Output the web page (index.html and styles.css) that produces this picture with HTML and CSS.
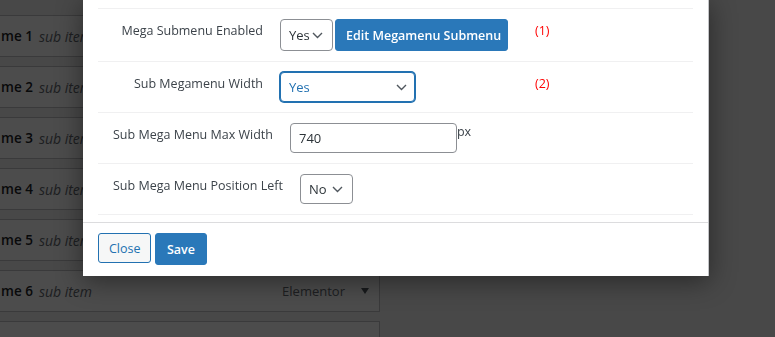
FILE: index.html
```html
<!DOCTYPE html>
<html lang="en">
<head>
  <meta charset="UTF-8">
  <meta name="viewport" content="width=device-width, initial-scale=1.0">
  <title>Mega Menu Settings</title>
  <link rel="stylesheet" href="styles.css">
</head>
<body>
  <ul class="menu-list">
    <li class="menu-item"><span class="item-title">me 1</span><em class="item-sub">sub item</em><span class="item-type">Elementor</span><span class="item-arrow"></span></li>
    <li class="menu-item"><span class="item-title">me 2</span><em class="item-sub">sub item</em><span class="item-type">Elementor</span><span class="item-arrow"></span></li>
    <li class="menu-item"><span class="item-title">me 3</span><em class="item-sub">sub item</em><span class="item-type">Elementor</span><span class="item-arrow"></span></li>
    <li class="menu-item"><span class="item-title">me 4</span><em class="item-sub">sub item</em><span class="item-type">Elementor</span><span class="item-arrow"></span></li>
    <li class="menu-item"><span class="item-title">me 5</span><em class="item-sub">sub item</em><span class="item-type">Elementor</span><span class="item-arrow"></span></li>
    <li class="menu-item"><span class="item-title">me 6</span><em class="item-sub">sub item</em><span class="item-type">Elementor</span><span class="item-arrow"></span></li>
    <li class="menu-item"></li>
  </ul>

  <div class="backdrop"></div>

  <div class="dialog">
    <div class="dialog-body">
      <div class="row">
        <label class="row-label">Mega Submenu Enabled</label>
        <div class="row-field">
          <select class="select select-small">
            <option>Yes</option>
            <option>No</option>
          </select>
          <button class="btn btn-primary btn-edit">Edit Megamenu Submenu</button>
        </div>
        <span class="row-note">(1)</span>
      </div>

      <div class="row">
        <label class="row-label">Sub Megamenu Width</label>
        <div class="row-field">
          <select class="select select-wide is-focus">
            <option>Yes</option>
            <option>No</option>
          </select>
        </div>
        <span class="row-note">(2)</span>
      </div>

      <div class="row">
        <label class="row-label">Sub Mega Menu Max Width</label>
        <div class="row-field">
          <input class="text-input" type="text" value="740"><span class="unit">px</span>
        </div>
      </div>

      <div class="row">
        <label class="row-label">Sub Mega Menu Position Left</label>
        <div class="row-field">
          <select class="select select-small">
            <option>No</option>
            <option>Yes</option>
          </select>
        </div>
      </div>
    </div>

    <div class="dialog-footer">
      <button class="btn btn-secondary">Close</button>
      <button class="btn btn-primary btn-save">Save</button>
    </div>
  </div>
</body>
</html>
```

FILE: styles.css
```css
body {
  margin: 0;
  background: #f0f0f1;
  font-family: "Open Sans", "Noto Sans", sans-serif;
  font-size: 12.5px;
  color: #3c434a;
  overflow: hidden;
}

/* page behind the modal */
.menu-list {
  list-style: none;
  margin: 15px 0 0 -10px;
  padding: 0;
  width: 390px;
}
.menu-item {
  display: flex;
  align-items: center;
  height: 40px;
  margin-bottom: 9px;
  padding: 0 10px;
  background: #fff;
  border: 1px solid #c3c4c7;
}
.item-title {
  font-weight: 600;
  color: #1d2327;
  font-size: 13.5px;
}
.item-sub {
  margin-left: 6px;
  color: #646970;
  font-size: 14px;
}
.item-type {
  margin-left: auto;
  color: #646970;
  font-size: 13px;
}
.item-arrow {
  width: 0;
  height: 0;
  margin-left: 16px;
  border-left: 4px solid transparent;
  border-right: 4px solid transparent;
  border-top: 6px solid #50575e;
}

.backdrop {
  position: fixed;
  inset: 0;
  background: rgba(0, 0, 0, 0.7);
}

/* modal */
.dialog {
  position: absolute;
  left: 83px;
  top: -1px;
  width: 625px;
  background: #fff;
  border-right: 1px solid #c3c4c7;
  box-shadow: 0 5px 25px rgba(0, 0, 0, 0.45);
}
.dialog-body {
  padding: 9px 15px 7px;
}
.row {
  display: flex;
  align-items: flex-start;
  padding: 10px 0;
  border-top: 1px solid #f0f0f1;
}
.row:last-child {
  border-bottom: 1px solid #f0f0f1;
}
.row-label {
  flex-shrink: 0;
  min-width: 150px;
  margin-top: 2px;
  padding: 0 15px;
  text-align: right;
  line-height: 19px;
}
.row-field {
  display: flex;
  align-items: flex-start;
  width: 255px;
  flex-shrink: 0;
  padding-left: 2px;
}
.row-note {
  color: #f00;
  line-height: 19px;
  margin-top: 2px;
}

.select {
  appearance: none;
  -webkit-appearance: none;
  height: 32px;
  margin: 0;
  padding: 0 20px 0 8px;
  font: inherit;
  font-size: 13px;
  color: #2c3338;
  background: #fff url("data:image/svg+xml,%3Csvg xmlns='http://www.w3.org/2000/svg' width='11' height='7'%3E%3Cpath d='M1 1l4.5 4.5L10 1' fill='none' stroke='%2350575e' stroke-width='1.4'/%3E%3C/svg%3E") no-repeat right 9px center;
  border: 1px solid #8c8f94;
  border-radius: 4px;
}
.select-small {
  width: 53px;
}
.select-wide {
  width: 135px;
  height: 30px;
  background-position: right 7px center;
}
.select.is-focus {
  color: #2271b1;
  border-color: #2271b1;
  box-shadow: 0 0 0 1px #2271b1;
  outline: none;
}
.row:last-child .select {
  height: 30px;
}

.text-input {
  box-sizing: border-box;
  width: 167px;
  height: 30px;
  margin: 0;
  padding: 0 8px;
  font: inherit;
  font-size: 13px;
  color: #2c3338;
  border: 1px solid #8c8f94;
  border-radius: 4px;
}
.unit {
  line-height: 19px;
  margin-top: -1px;
}

.btn {
  font: inherit;
  font-size: 12.5px;
  white-space: nowrap;
  border-radius: 3px;
  cursor: pointer;
  padding: 0 10px;
}
.btn-primary {
  color: #fff;
  font-weight: 600;
  background: #2a78b9;
  border: 1px solid #2a78b9;
}
.btn-edit {
  width: 173px;
  height: 32px;
  margin-left: 2px;
}
.btn-secondary {
  width: 53px;
  height: 30px;
  color: #2271b1;
  background: #f6f7f7;
  border: 1px solid #2271b1;
}
.btn-save {
  width: 52px;
  height: 32px;
  margin-left: 4px;
}

.dialog-footer {
  display: flex;
  align-items: flex-start;
  padding: 10px 15px 11px;
  border-top: 1px solid #dcdcde;
}
```
